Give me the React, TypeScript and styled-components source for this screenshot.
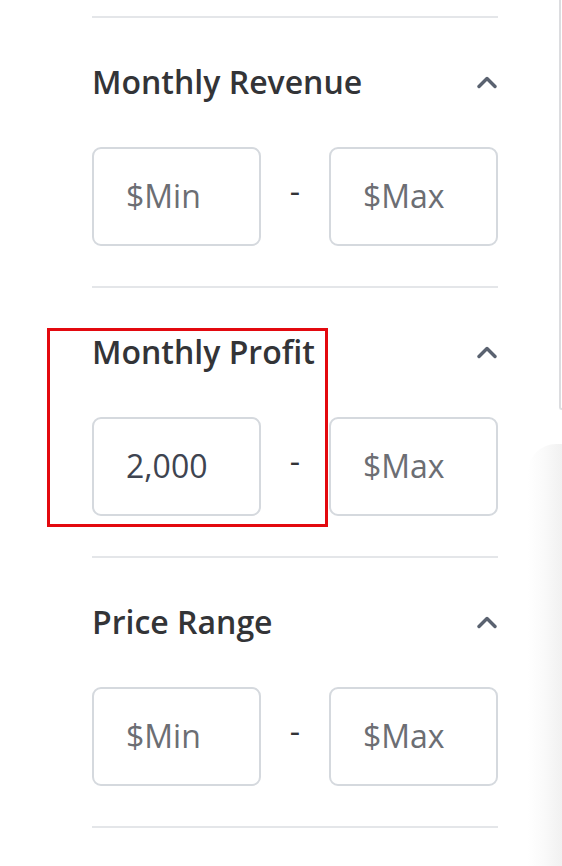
import React from "react";
import styled, { createGlobalStyle } from "styled-components";

const Global = createGlobalStyle`
  html, body { margin: 0; padding: 0; background: #ffffff; }
  body { font-family: "Open Sans", "Noto Sans", sans-serif; }
  * { box-sizing: border-box; }
`;

const Page = styled.div`
  display: flex;
  width: 562px;
  height: 866px;
  overflow: hidden;
  background: #fff;
`;

const FilterColumn = styled.div`
  width: 406px;
  margin-left: 92px;
  padding-top: 16px;
  display: flex;
  flex-direction: column;
`;

const Section = styled.section`
  position: relative;
  border-top: 2px solid #e4e6e9;
  padding: 39px 0 40px;
  &:last-child { padding-bottom: 0; }
`;

const Header = styled.div`
  display: flex;
  align-items: center;
  justify-content: space-between;
  height: 50px;
  margin-bottom: 40px;
`;

const Title = styled.h3`
  margin: 0;
  font-size: 32px;
  font-weight: 600;
  color: #333437;
  letter-spacing: 0;
  line-height: 50px;
`;

const Toggle = styled.button`
  border: none;
  background: none;
  padding: 0;
  margin-right: 1px;
  width: 20px;
  height: 14px;
  display: flex;
  align-items: center;
  justify-content: center;
  cursor: pointer;
`;

const RangeRow = styled.div`
  display: flex;
  align-items: center;
`;

const Field = styled.input`
  width: 169px;
  height: 99px;
  border: 2px solid #d5d9de;
  border-radius: 9px;
  padding: 0 0 2px 32px;
  font-family: "Open Sans", "Noto Sans", sans-serif;
  font-size: 32px;
  color: #3e4450;
  background: #fff;
  outline: none;
  &::placeholder { color: #6c6e73; opacity: 1; }
`;

const Dash = styled.span`
  flex: 1;
  text-align: center;
  font-size: 32px;
  color: #333437;
  padding-bottom: 12px;
`;

const Highlight = styled.div`
  position: absolute;
  left: -45px;
  top: 40px;
  width: 281px;
  height: 199px;
  border: 3px solid #e3090f;
  pointer-events: none;
`;

const RightRail = styled.div`
  margin-left: auto;
  width: 34px;
  display: flex;
  flex-direction: column;
`;

const PanelEdge = styled.div`
  margin-left: 31px;
  height: 410px;
  border-left: 2px solid #dcdde0;
  border-bottom: 2px solid #dcdde0;
  border-bottom-left-radius: 8px;
`;

const ShadowPanel = styled.div`
  margin-top: 34px;
  flex: 1;
  border-top-left-radius: 28px;
  background: linear-gradient(to right, #ffffff 0%, #fafafa 45%, #f1f1f1 100%);
`;

const Chevron = () => (
  <svg width="20" height="14" viewBox="0 0 20 14" fill="none">
    <polyline
      points="2,11.5 10,3.5 18,11.5"
      stroke="#5a6270"
      strokeWidth="3.4"
      strokeLinecap="round"
      strokeLinejoin="round"
    />
  </svg>
);

type RangeProps = {
  title: string;
  min?: string;
  highlighted?: boolean;
};

const RangeFilter = ({ title, min, highlighted }: RangeProps) => (
  <Section>
    <Header>
      <Title>{title}</Title>
      <Toggle aria-label="Collapse">
        <Chevron />
      </Toggle>
    </Header>
    <RangeRow>
      <Field placeholder="$Min" defaultValue={min} />
      <Dash>-</Dash>
      <Field placeholder="$Max" />
    </RangeRow>
    {highlighted && <Highlight />}
  </Section>
);

export default function App() {
  return (
    <Page>
      <Global />
      <FilterColumn>
        <RangeFilter title="Monthly Revenue" />
        <RangeFilter title="Monthly Profit" min="2,000" highlighted />
        <RangeFilter title="Price Range" />
        <Section />
      </FilterColumn>
      <RightRail>
        <PanelEdge />
        <ShadowPanel />
      </RightRail>
    </Page>
  );
}
